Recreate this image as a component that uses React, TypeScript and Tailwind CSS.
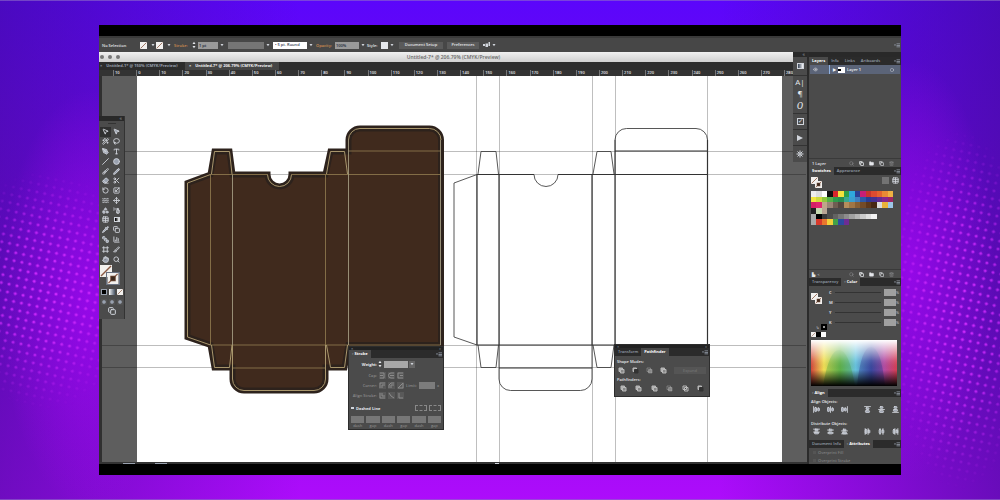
import React from "react";
import clsx from "clsx";
import {
  AlignHorizontalDistributeCenter,
  AlignHorizontalDistributeEnd,
  AlignHorizontalDistributeStart,
  AlignHorizontalJustifyCenter,
  AlignHorizontalJustifyEnd,
  AlignHorizontalJustifyStart,
  AlignVerticalDistributeCenter,
  AlignVerticalDistributeEnd,
  AlignVerticalDistributeStart,
  AlignVerticalJustifyCenter,
  AlignVerticalJustifyEnd,
  AlignVerticalJustifyStart,
  Brush,
  ChartColumn,
  Circle,
  Copy,
  Eraser,
  Eye,
  Folder,
  Frame,
  Hand,
  Lasso,
  MousePointer2,
  Move,
  PenTool,
  Pencil,
  Pipette,
  RotateCcw,
  Scaling,
  Scissors,
  Search,
  Shapes,
  Slash,
  Slice,
  SprayCan,
  SquareStack,
  Table,
  Trash2,
  Type,
  WandSparkles,
  Waves,
} from "lucide-react";

const Caret = () => (
  <svg viewBox="0 0 4 4" className="h-1 w-1 flex-none fill-gray-300">
    <path d="M.5 1h3L2 3.2z" />
  </svg>
);

const Stepper = () => (
  <svg viewBox="0 0 4 8" className="h-2 w-1 flex-none fill-gray-200">
    <path d="M.5 3h3L2 .8zM.5 5h3L2 7.2z" />
  </svg>
);

const PanelMenu = () => (
  <svg
    viewBox="0 0 6 5"
    className="ml-auto mr-px h-[5px] w-[6px] flex-none fill-gray-400"
  >
    <path d="M0 1.5h2L1 3zM2.5.5H6v.8H2.5zM2.5 2H6v.8H2.5zM2.5 3.5H6v.8H2.5z" />
  </svg>
);

// white square crossed by the red "none" stroke
const NoneSwatch: React.FC<{ className?: string; ring?: boolean }> = ({
  className,
  ring,
}) => (
  <svg viewBox="0 0 12 12" className={clsx("flex-none", className)}>
    <rect width="12" height="12" fill="#f2f0ee" />
    <path d="M1 11 11 1" stroke="#8a5a44" strokeWidth="1.4" />
    {ring && (
      <>
        <rect x="3" y="3" width="6" height="6" fill="#6b4430" />
        <rect x="4" y="4" width="4" height="4" fill="#3c2a20" />
      </>
    )}
  </svg>
);

const Tabs: React.FC<{ items: string[]; active: string }> = ({
  items,
  active,
}) => (
  <div className="flex h-2 flex-none items-stretch bg-[#2b2b2b]">
    {items.map((item) => (
      <button
        key={item}
        className={clsx(
          "px-[3px] leading-none",
          item === active
            ? "bg-[#4a4a4a] font-bold text-white"
            : "font-semibold text-gray-400"
        )}
      >
        {item}
      </button>
    ))}
    <div className="ml-auto flex items-center">
      <PanelMenu />
    </div>
  </div>
);

const OptionsBar = () => (
  <div className="flex h-4 flex-none items-center border-t-2 border-[#3a3a3a] bg-[#474747] pl-[3px] font-semibold text-gray-200">
    <span className="w-[38px]">No Selection</span>
    <div className="flex w-4 items-center gap-1">
      <NoneSwatch className="h-[7px] w-[7px]" />
      <Caret />
    </div>
    <div className="flex w-[18px] items-center gap-1">
      <NoneSwatch className="h-[7px] w-[7px]" />
      <Caret />
    </div>
    <label htmlFor="stroke" className="w-[18px] text-[#d08c50]">
      Stroke:
    </label>
    <div className="flex w-9 items-center gap-[2px]">
      <Stepper />
      <input
        id="stroke"
        defaultValue="1 pt"
        className="h-[7px] w-5 bg-[#9a9a9a] pl-px leading-none text-gray-800"
      />
      <Caret />
    </div>
    <div className="flex w-[45px] items-center gap-[2px]">
      <select
        aria-label="Width profile"
        className="h-[7px] w-9 appearance-none bg-[#757575]"
      />
      <Caret />
    </div>
    <div className="flex w-[43px] items-center gap-[2px]">
      <select
        aria-label="Brush"
        className="h-[7px] w-[34px] appearance-none bg-white pl-[2px] leading-none text-gray-700"
      >
        <option>•  5 pt. Round</option>
      </select>
      <Caret />
    </div>
    <label htmlFor="opacity" className="w-[19px] text-[#d08c50]">
      Opacity:
    </label>
    <div className="flex w-8 items-center gap-[2px]">
      <input
        id="opacity"
        defaultValue="100%"
        className="h-[7px] w-6 bg-[#9a9a9a] pl-px leading-none text-gray-800"
      />
      <Caret />
    </div>
    <span className="w-[14px]">Style:</span>
    <div className="flex w-[18px] items-center gap-[2px]">
      <span className="h-[7px] w-[7px] bg-gray-200" />
      <Caret />
    </div>
    <div className="flex items-center gap-1">
      <button className="h-[7px] w-11 whitespace-nowrap bg-[#5a5a5a] leading-none">
        Document Setup
      </button>
      <button className="h-[7px] w-8 bg-[#5a5a5a] leading-none">
        Preferences
      </button>
      <button aria-label="Align to" className="flex items-center gap-[2px]">
        <svg viewBox="0 0 7 6" className="h-[6px] w-[7px] fill-gray-300">
          <path d="M0 2h2v2H0zM2.500 1.500H5V5H2.500zM5.500 0H7v4H5.500z" />
        </svg>
        <Caret />
      </button>
    </div>
    <PanelMenu />
  </div>
);

const ticks = [
  10,
  ...Array.from({ length: 29 }, (_, i) => i * 10),
];

const DocumentHead = () => (
  <>
    <div className="flex h-[10px] flex-none items-center bg-gradient-to-b from-[#f0f0f0] to-[#cfcfcf] pl-px">
      <div className="flex w-0 gap-[4px]">
        {["Close", "Minimise", "Zoom"].map((name) => (
          <button
            key={name}
            aria-label={name}
            className="h-1 w-1 flex-none rounded-full bg-[#777]"
          />
        ))}
      </div>
      <h1 className="flex-1 text-center text-[5px] font-semibold leading-none text-[#666]">
        Untitled-7* @ 206.79% (CMYK/Preview)
      </h1>
    </div>
    <div className="flex h-2 flex-none bg-[#2c2c2c]">
      <button className="flex w-[86px] items-center gap-1 whitespace-nowrap pl-px font-bold leading-none text-gray-400">
        <span>×</span>
        <span>Untitled-1* @ 150% (CMYK/Preview)</span>
      </button>
      <button className="flex w-[94px] items-center gap-1 whitespace-nowrap bg-[#454545] pl-1 font-bold leading-none text-gray-100">
        <span>×</span>
        <span>Untitled-7* @ 206.79% (CMYK/Preview)</span>
      </button>
    </div>
    <div className="flex h-[6px] flex-none overflow-hidden bg-[#333] pl-[14px]">
      {ticks.map((tick, i) => (
        <span
          key={i}
          className="min-w-0 flex-1 border-l border-[#777] pl-px font-semibold leading-[6px] text-gray-200"
        >
          {tick}
        </span>
      ))}
    </div>
  </>
);

const CREASES =
  "M477 174.5H534M558 174.5H707.5M477 345H707.5M477 174.5V345M499 174.5V345M592 174.5V345M615 140V345M707.5 140V345M615 151H707.5M499 368H592";
const FLAPS =
  "M477 174.5 454 183V337L477 345M478 174 481 151.5H496L498.5 174M593 174 597 151.5H611L614 174M478 345 481 367.5H496L498.5 345M593 345 597 367.5H611L614 345M534 174.5A11.5 11.5 0 0 0 558 174.5M615 140A11.5 11.5 0 0 1 626.500 128.500H696A11.5 11.5 0 0 1 707.5 140M499 345V379A11.5 11.5 0 0 0 510.500 390.500H580.500A11.5 11.5 0 0 0 592 379V345";
const SILHOUETTE =
  "M454 183 477 174.5 481 151.5H496L499 174.5H534A11.5 11.5 0 0 0 558 174.5H592L597 151.5H615V140A11.5 11.5 0 0 1 626.500 128.500H696A11.5 11.5 0 0 1 707.5 140V345H615L611 367.5H592V379A11.5 11.5 0 0 1 580.500 390.500H510.500A11.5 11.5 0 0 1 499 379V367.5H481L477 345 454 337Z";

const Artwork = () => (
  <svg
    viewBox="99 76 708 386"
    preserveAspectRatio="xMidYMid slice"
    className="h-full w-full"
    fill="none"
  >
    <rect x="99" y="76" width="708" height="386" fill="#5e5e5e" />
    <rect x="99" y="76" width="3" height="386" fill="#303030" />
    <rect x="137" y="76" width="645" height="386" fill="#fff" />
    <path
      d="M102 151.500H806M102 174.500H806M102 345.500H806M102 367.500H806"
      stroke="#000"
      strokeOpacity=".26"
    />
    <path
      d="M476.500 76V462M499.500 76V462M592.500 76V462M615.500 76V462M707.500 76V462"
      stroke="#000"
      strokeOpacity=".25"
    />
    <g transform="translate(-266.500 0)">
      <path d={SILHOUETTE} fill="#402a1d" stroke="#2d221c" strokeWidth="6" />
      <path
        d="M477 174.5H534M558 174.5H707M477 345H707M615 151H707M499 368H592M477 174.5V345M592 174.5V345"
        stroke="#8b754c"
        strokeWidth=".9"
      />
      <path
        d="M499 174.5V379M615 140V345M707 140V345"
        stroke="#a39a80"
        strokeWidth=".9"
      />
      <path d={FLAPS} stroke="#a8966c" />
    </g>
    <path d={FLAPS} stroke="#444" strokeWidth=".9" />
    <path d={CREASES} stroke="#333" strokeWidth="1.2" />
  </svg>
);

const tools = [
  MousePointer2, MousePointer2, WandSparkles, Lasso, PenTool, Type,
  Slash, Circle, Brush, Pencil, Eraser, Scissors,
  RotateCcw, Scaling, Waves, Move, Shapes, SprayCan,
  Table, null, Pipette, Copy, SquareStack, ChartColumn,
  Frame, Slice, Hand, Search,
];

const toolNames = [
  "Selection", "Direct selection", "Magic wand", "Lasso", "Pen", "Type",
  "Line", "Ellipse", "Brush", "Pencil", "Eraser", "Scissors",
  "Rotate", "Scale", "Width", "Free transform", "Shape builder", "Perspective",
  "Mesh", "Gradient", "Eyedropper", "Blend", "Symbol", "Graph",
  "Artboard", "Slice", "Hand", "Zoom",
];

// tools drawn solid rather than outlined
const solidTools = [
  "Direct selection", "Pen", "Ellipse", "Eraser", "Pencil", "Shape builder",
  "Hand", "Eyedropper", "Symbol",
];

const Toolbox = () => (
  <aside className="absolute left-0 top-[40px] w-[26px] border-r border-[#333] bg-[#4b4b4b] pb-[2px]">
    <div className="flex h-[5px] items-center justify-end bg-[#292929] pr-[2px] text-[5px] leading-none text-gray-400">
      «
    </div>
    <div className="mx-auto mb-[3px] mt-[2px] h-px w-2 bg-[#333]" />
    <div className="ml-px grid h-[137px] w-[22px] grid-cols-2 grid-rows-14">
      {tools.map((Icon, i) => (
        <button
          key={toolNames[i]}
          aria-label={toolNames[i]}
          className={clsx(
            "flex items-center justify-center text-gray-300",
            i === 0 && "bg-[#303030]"
          )}
        >
          {Icon ? (
            <Icon
              size={7}
              strokeWidth={3}
              className={clsx(
                solidTools.includes(toolNames[i]) && "fill-gray-400"
              )}
            />
          ) : (
            <span className="h-[5px] w-[6px] border border-gray-300 bg-gradient-to-r from-black to-white" />
          )}
        </button>
      ))}
    </div>
    <div className="relative ml-px h-[21px]">
      <NoneSwatch className="h-[14px] w-3" />
      <NoneSwatch
        ring
        className="absolute left-[6px] top-2 h-[13px] w-[14px] border border-gray-500"
      />
    </div>
    <div className="mt-1 flex items-center gap-[2px] pl-[2px]">
      <span className="h-[6px] w-[6px] border border-gray-400 bg-black" />
      <span className="h-[6px] w-[6px] bg-gradient-to-r from-white to-gray-600" />
      <NoneSwatch className="h-[6px] w-[6px]" />
    </div>
    <div className="mt-1 flex items-center gap-[2px] pl-[2px]">
      {[0, 1, 2].map((i) => (
        <span
          key={i}
          className="flex h-[6px] w-[6px] items-center justify-center bg-neutral-600"
        >
          <Circle size={4} className="fill-gray-400 text-gray-400" />
        </span>
      ))}
    </div>
    <div className="flex h-[12px] items-center justify-center">
      <Copy size={8} strokeWidth={3} className="text-gray-300" />
    </div>
  </aside>
);

const FloatingHeader = () => (
  <div className="flex h-[3px] items-center justify-between bg-[#222] px-[2px] leading-none text-gray-400">
    <span>×</span>
    <span>«</span>
  </div>
);

const strokeRows = [
  { label: "Cap:", icons: ["M1 1h4v5H1M1 3.500h3", "M6 1H3a2.500 2.500 0 0 0 0 5h3M2 3.500h4", "M6 1H1v5h5M3 3.500h3"] },
  { label: "Corner:", icons: ["M1 6V1h5M3 6V3h3", "M1 6V3l2-2h3M3 6V3h3", "M1 6 6 1v5z"] },
  { label: "Align Stroke:", icons: ["M1 1v5h5M3 1v3h3", "M1 1l2 3 3 2", "M2 1v5h4"] },
];

const StrokePanel = () => (
  <section className="absolute left-[249px] top-[270px] w-24 border border-[#2d2d2d] bg-[#4b4b4b] pb-px text-gray-200">
    <FloatingHeader />
    <Tabs items={["◦ Stroke"]} active="◦ Stroke" />
    <div className="flex h-3 items-center gap-px">
      <label htmlFor="weight" className="w-[28px] text-right font-bold">
        Weight:
      </label>
      <Stepper />
      <input id="weight" className="ml-px h-[7px] w-6 bg-[#a8a8a8]" />
      <span className="flex h-[7px] w-[6px] items-center justify-center bg-[#666]">
        <Caret />
      </span>
    </div>
    {strokeRows.map((row) => (
      <div
        key={row.label}
        className="flex h-[10px] items-center gap-[2px] font-semibold text-[#8a8a8a]"
      >
        <span className="w-[28px] whitespace-nowrap text-right">
          {row.label}
        </span>
        {row.icons.map((d, i) => (
          <button
            key={i}
            aria-label={row.label + " " + (i + 1)}
            className="bg-[#595959]"
          >
            <svg
              viewBox="0 0 7 7"
              className="h-[7px] w-[7px] fill-none stroke-[#8c8c8c]"
            >
              <path d={d} />
            </svg>
          </button>
        ))}
        {row.label === "Corner:" && (
          <>
            <label htmlFor="limit">Limit:</label>
            <input id="limit" className="h-[7px] w-4 bg-[#7c7c7c]" />
            <span>x</span>
          </>
        )}
      </div>
    ))}
    <div className="flex h-4 items-center gap-[2px] px-[2px]">
      <input
        id="dashed"
        type="checkbox"
        className="h-[2px] w-[3px] appearance-none bg-gray-300"
      />
      <label htmlFor="dashed" className="flex-1 font-bold">
        Dashed Line
      </label>
      <span className="h-[6px] w-3 border border-dashed border-[#888]" />
      <span className="h-[6px] w-3 border border-dashed border-[#888]" />
    </div>
    <div className="grid grid-cols-6 gap-[2px] px-[2px]">
      {["dash", "gap", "dash", "gap", "dash", "gap"].map((name, i) => (
        <label key={i} className="text-center text-[#999]">
          <input className="block h-[7px] w-full bg-[#777]" />
          {name}
        </label>
      ))}
    </div>
  </section>
);

const PathIcon: React.FC<{ name: string; kind: number }> = ({
  name,
  kind,
}) => (
  <button aria-label={name}>
    <svg viewBox="0 0 7 7" className="h-[7px] w-[7px] stroke-[#bbb]">
      <path
        d="M1 1h3.500v3.500H1z"
        fill={kind === 1 || kind === 3 ? "none" : "#aaa"}
        strokeOpacity={kind === 1 ? 0.4 : 1}
      />
      <path
        d="M2.500 2.500H6V6H2.500z"
        stroke={kind === 2 ? "#333" : undefined}
        strokeOpacity={kind === 1 ? 0.4 : 1}
        fill={kind === 2 ? "#333" : kind === 3 ? "none" : "#888"}
      />
    </svg>
  </button>
);

const PathfinderPanel = () => (
  <section className="absolute left-[515px] top-[268px] w-24 border border-[#2d2d2d] bg-[#4b4b4b] pb-1 text-gray-200">
    <FloatingHeader />
    <Tabs items={["Transform", "Pathfinder"]} active="Pathfinder" />
    <h2 className="px-[2px] pt-[3px] font-semibold">Shape Modes:</h2>
    <div className="flex items-center justify-between px-[3px] py-[3px]">
      {["Unite", "Minus front", "Intersect", "Exclude"].map((name, i) => (
        <PathIcon key={name} name={name} kind={[0, 2, 1, 0][i]} />
      ))}
      <button className="h-[7px] w-8 bg-[#555] leading-none text-[#7a7a7a]">
        Expand
      </button>
    </div>
    <h2 className="px-[2px] font-semibold">Pathfinders:</h2>
    <div className="flex justify-between px-[5px] pt-[3px]">
      {["Divide", "Trim", "Merge", "Crop", "Outline", "Minus back"].map(
        (name, i) => (
          <PathIcon key={name} name={name} kind={[0, 0, 0, 1, 3, 2][i]} />
        )
      )}
    </div>
  </section>
);

const Dock = () => (
  <aside className="absolute right-0 top-0 w-[14px] bg-[#4b4b4b] text-[8px] text-gray-200">
    <div className="h-[5px] bg-[#292929] pr-[2px] text-right text-[5px] leading-none text-gray-400">
      «
    </div>
    <div className="flex h-[19px] items-center justify-center border-b border-[#333]">
      <span className="h-[6px] w-[7px] border border-gray-300 bg-gradient-to-r from-gray-700 to-white" />
    </div>
    <div className="flex h-[38px] flex-col items-center justify-around border-b border-[#333] leading-none">
      <button>A|</button>
      <button>¶</button>
      <button className="font-serif text-[10px] italic">O</button>
    </div>
    <div className="flex h-4 items-center justify-center border-b border-[#333]">
      <button className="h-[7px] w-[7px] border border-gray-300 text-[6px] leading-[5px]">
        ✓
      </button>
    </div>
    <div className="flex h-4 items-center justify-center border-b border-[#333]">
      <svg viewBox="0 0 6 6" className="h-[6px] w-[6px] fill-gray-300">
        <path d="M0 0 6 3 0 6z" />
      </svg>
    </div>
    <div className="flex h-4 items-center justify-center">
      <svg viewBox="0 0 8 8" className="h-2 w-2 stroke-gray-300">
        <path d="M4 .5v7M.5 4h7M1.500 1.500l5 5M6.500 1.500l-5 5" />
        <circle cx="4" cy="4" r="1" fill="#555" />
      </svg>
    </div>
  </aside>
);

const swatchRows = [
  ["#eee", "#ddd", "#fff", "#111", "#d8262c", "#f4e23c", "#2f9e49", "#2fa8dc", "#2b3f94", "#c81f76", "#c9342e", "#dd4b31", "#e4622f", "#e98a34", "#efb043"],
  ["#f2e63f", "#cddb3c", "#8fc63f", "#56b14a", "#2f9b4c", "#2b8d50", "#39a78f", "#3a9fd0", "#3f7fc0", "#2d5aa6", "#2c3c92", "#453290", "#652d90", "#86278c", "#9c2563"],
  ["#d51f66", "#e0256f", "#c0a58a", "#9a8676", "#6f5e52", "#54473f", "#b58d5c", "#a07646", "#875f36", "#744b27", "#5e381b", "#472813", "#dcdcdc", "#eab23a", "#9cc6e8"],
  ["#222", "#c6d8b0", "#b9a594"],
  ["#aaa", "#000", "#3a3a3a", "#4d4d4d", "#626262", "#777", "#8c8c8c", "#a1a1a1", "#b5b5b5", "#cacaca", "#dedede", "#f3f3f3"],
  ["#aaa", "#d83a2c", "#e9762e", "#f2cf3b", "#41a048", "#2c4ba0", "#6e2c93"],
];

const PanelFooter: React.FC<{ children?: React.ReactNode }> = ({
  children,
}) => (
  <div className="flex h-[9px] flex-none items-center justify-between border-t border-[#3a3a3a] px-[3px] font-semibold text-gray-200">
    {children}
    <div className="mr-1 flex gap-[5px]">
      <Search size={5} className="opacity-50" />
      <Copy size={5} strokeWidth={4} />
      <Folder size={5} className="fill-current" />
      <Copy size={5} strokeWidth={3} />
      <Trash2 size={5} className="opacity-50" />
    </div>
  </div>
);

const FillStroke = () => (
  <div className="relative h-[11px] w-[11px]">
    <NoneSwatch className="h-[7px] w-[7px]" />
    <NoneSwatch ring className="absolute left-1 top-1 h-[7px] w-[7px]" />
  </div>
);

const Spectrum = () => (
  <svg
    viewBox="0 0 86 46"
    preserveAspectRatio="none"
    className="h-[46px] w-full"
  >
    <defs>
      <linearGradient id="hue">
        <stop offset="0" stopColor="#d4473c" />
        <stop offset=".15" stopColor="#f2e054" />
        <stop offset=".34" stopColor="#6cb850" />
        <stop offset=".52" stopColor="#67c3e0" />
        <stop offset=".7" stopColor="#4453a8" />
        <stop offset=".85" stopColor="#b34ca4" />
        <stop offset="1" stopColor="#d63f53" />
      </linearGradient>
      <linearGradient id="shade" x2="0" y2="1">
        <stop offset="0" stopColor="#fff" />
        <stop offset=".12" stopColor="#fff" stopOpacity=".75" />
        <stop offset=".45" stopColor="#fff" stopOpacity=".1" />
        <stop offset=".65" stopColor="#000" stopOpacity="0" />
        <stop offset="1" stopColor="#000" />
      </linearGradient>
    </defs>
    <rect width="86" height="46" fill="url(#hue)" />
    <path d="M12 46Q18 10 28 10T44 46z" fill="#3f9f3c" opacity=".3" />
    <path d="M46 46Q50 7 60 7T74 46z" fill="#27358f" opacity=".35" />
    <rect width="86" height="46" fill="url(#shade)" />
  </svg>
);

const alignRows = [
  {
    label: "Align Objects:",
    icons: [
      AlignHorizontalJustifyStart, AlignHorizontalJustifyCenter, AlignHorizontalJustifyEnd,
      AlignVerticalJustifyStart, AlignVerticalJustifyCenter, AlignVerticalJustifyEnd,
    ],
  },
  {
    label: "Distribute Objects:",
    icons: [
      AlignVerticalDistributeStart, AlignVerticalDistributeCenter, AlignVerticalDistributeEnd,
      AlignHorizontalDistributeStart, AlignHorizontalDistributeCenter, AlignHorizontalDistributeEnd,
    ],
  },
];

const Sidebar = () => (
  <aside className="flex w-[94px] flex-none flex-col overflow-hidden border-l-2 border-[#2b2b2b] bg-[#4b4b4b] text-gray-300">
    <div className="h-[5px] flex-none bg-[#292929]" />
    <Tabs items={["Layers", "Info", "Links", "Artboards"]} active="Layers" />
    <div className="mx-px flex h-[9px] flex-none items-center bg-[#5b6478] font-semibold text-gray-100">
      <Eye size={5} className="mx-[3px]" />
      <span className="ml-[8px] h-full w-px bg-[#8fb1e0]" />
      <span className="w-2 text-center">▶</span>
      <span className="flex h-[6px] w-[7px] items-center bg-white">
        <span className="h-[2px] w-[3px] bg-black" />
      </span>
      <span className="ml-[2px] flex-1">Layer 1</span>
      <Circle size={4} className="mr-[6px]" />
    </div>
    <div className="flex-1" />
    <PanelFooter>
      <span>1 Layer</span>
    </PanelFooter>
    <Tabs items={["Swatches", "Appearance"]} active="Swatches" />
    <div className="h-[94px] flex-none px-[2px] pt-[2px]">
      <div className="flex h-[14px] items-start justify-between">
        <FillStroke />
        <div className="flex gap-[3px]">
          <span className="h-[7px] w-[7px] bg-neutral-500" />
          <Table size={7} strokeWidth={3} className="text-gray-300" />
        </div>
      </div>
      <div className="mr-[6px] grid h-[34px] grid-cols-15 grid-rows-6">
        {swatchRows.map((row, r) =>
          row.map((color, i) => (
            <span
              key={r + "-" + i}
              className={clsx(i === 0 && "col-start-1")}
              style={{ background: color }}
            />
          ))
        )}
      </div>
    </div>
    <PanelFooter>
      <span>▙. &lt;</span>
    </PanelFooter>
    <Tabs items={["Transparency", "◦ Color"]} active="◦ Color" />
    <div className="flex-none px-[2px] pb-[3px] pt-px">
      <div className="flex h-[45px]">
        <div className="flex w-4 flex-none flex-col justify-between pb-[2px] pt-[6px]">
          <FillStroke />
          <div className="flex items-center justify-end gap-[2px]">
            <span>↳</span>
            <span className="h-[6px] w-[6px] border-2 border-black bg-[#999]" />
          </div>
        </div>
        <div className="flex flex-1 flex-col pl-[2px]">
          {["C", "M", "Y", "K"].map((channel) => (
            <div key={channel} className="flex h-[10px] items-center">
              <label htmlFor={"ch-" + channel} className="w-[6px] font-bold">
                {channel}
              </label>
              <span className="h-px flex-1 bg-[#333]" />
              <input
                id={"ch-" + channel}
                className="ml-[3px] h-[7px] w-3 bg-[#a0a0a0]"
              />
              <span>%</span>
            </div>
          ))}
        </div>
      </div>
      <div className="mb-[3px] flex h-[5px]">
        <NoneSwatch className="h-[5px] w-[5px]" />
        <span className="h-[5px] w-[5px] bg-black" />
        <span className="h-[5px] w-[5px] bg-white" />
      </div>
      <div className="mr-[2px]">
        <Spectrum />
      </div>
    </div>
    <Tabs items={["◦ Align"]} active="◦ Align" />
    <div className="h-[43px] flex-none px-[2px] pt-[2px]">
      {alignRows.map((row) => (
        <div key={row.label} className="h-[22px]">
          <h2 className="font-semibold text-gray-200">{row.label}</h2>
          <div className="flex justify-between pl-[2px] pt-[2px]">
            {row.icons.map((Icon, i) => (
              <button
                key={i}
                aria-label={row.label + " " + (i + 1)}
                className={clsx(i === 3 && "ml-2")}
              >
                <Icon size={7} strokeWidth={3} className="fill-gray-400" />
              </button>
            ))}
          </div>
        </div>
      ))}
    </div>
    <Tabs items={["Document Info", "◦ Attributes"]} active="◦ Attributes" />
    <div className="flex h-4 flex-none flex-col justify-around pl-[4px] font-semibold text-[#808080]">
      {["Overprint Fill", "Overprint Stroke"].map((name) => (
        <label key={name} className="flex items-center gap-[2px]">
          <input
            type="checkbox"
            disabled
            className="h-[3px] w-[3px] appearance-none bg-[#555]"
          />
          {name}
        </label>
      ))}
    </div>
  </aside>
);

const Backdrop = () => (
  <svg
    viewBox="0 0 1000 500"
    preserveAspectRatio="none"
    className="absolute inset-0 h-full w-full"
  >
    <defs>
      <linearGradient id="bg" x2="0" y2="1">
        <stop offset="0" stopColor="#5b06fb" />
        <stop offset=".5" stopColor="#8208e8" />
        <stop offset="1" stopColor="#ad0cfb" />
      </linearGradient>
      <linearGradient id="edge">
        <stop offset="0" stopColor="#3c0c90" stopOpacity=".55" />
        <stop offset=".3" stopColor="#3c0c90" stopOpacity="0" />
        <stop offset=".72" stopColor="#3c0c90" stopOpacity="0" />
        <stop offset="1" stopColor="#3c0c90" stopOpacity=".6" />
      </linearGradient>
      <radialGradient id="glow">
        <stop offset="0" stopColor="#a008f0" stopOpacity=".8" />
        <stop offset="1" stopColor="#a008f0" stopOpacity="0" />
      </radialGradient>
      <radialGradient id="fade">
        <stop offset="0" stopColor="#fff" />
        <stop offset=".5" stopColor="#bbb" />
        <stop offset="1" stopColor="#000" />
      </radialGradient>
      <pattern
        id="dots"
        width="8"
        height="8"
        patternUnits="userSpaceOnUse"
        patternTransform="rotate(12)"
      >
        <circle cx="4" cy="4" r="1.600" fill="#d22cff" />
      </pattern>
      <mask id="spots">
        <ellipse cx="45" cy="290" rx="95" ry="120" fill="url(#fade)" />
        <ellipse cx="960" cy="310" rx="75" ry="180" fill="url(#fade)" />
      </mask>
    </defs>
    <rect width="1000" height="500" fill="url(#bg)" />
    <rect width="1000" height="500" fill="url(#edge)" />
    <ellipse cx="90" cy="300" rx="90" ry="210" fill="url(#glow)" />
    <ellipse cx="910" cy="270" rx="85" ry="210" fill="url(#glow)" />
    <rect width="1000" height="500" fill="url(#dots)" mask="url(#spots)" />
    <path d="M0 .5H1000M0 499.500H1000" stroke="#8d6cc8" strokeOpacity=".6" />
  </svg>
);

const App = () => (
  <main className="relative flex min-h-screen flex-col px-[99px] py-[25px] font-['Open_Sans','Liberation_Sans',sans-serif] text-[4px] leading-[5px]">
    <Backdrop />
    <div className="relative flex flex-1 flex-col overflow-hidden border-b-[11px] border-t-[11px] border-black bg-[#474747]">
      <OptionsBar />
      <div className="flex flex-1">
        <div className="relative flex min-w-0 flex-1 flex-col">
          <DocumentHead />
          <div className="relative min-h-[386px] flex-1 overflow-hidden">
            <div className="absolute inset-0">
              <Artwork />
            </div>
            <Toolbox />
            <StrokePanel />
            <PathfinderPanel />
          </div>
          <div className="flex h-[2px] flex-none items-center gap-5 bg-[#333] pl-6">
            <span className="h-px w-3 bg-gray-400" />
            <span className="h-px w-3 bg-gray-400" />
            <span className="mx-auto h-px w-1 bg-gray-300" />
          </div>
          <Dock />
        </div>
        <Sidebar />
      </div>
    </div>
  </main>
);

export default App;
